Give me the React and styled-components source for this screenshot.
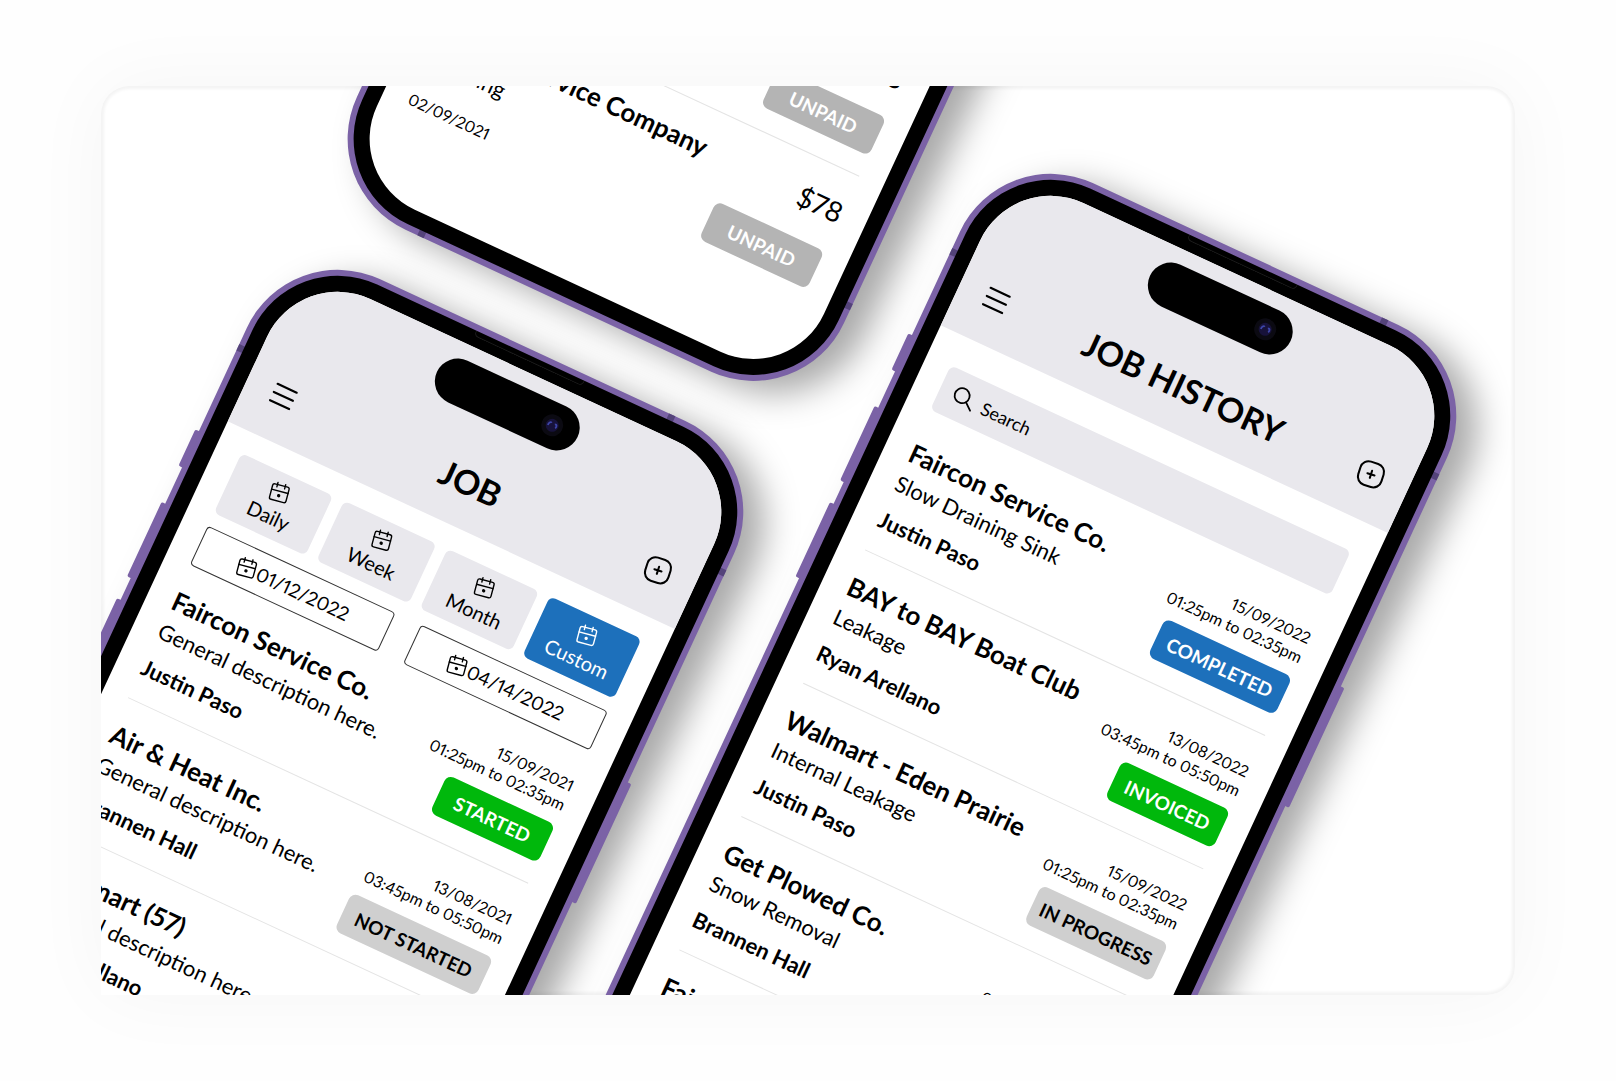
import React from 'react';
import styled, { createGlobalStyle } from 'styled-components';

const GlobalStyle = createGlobalStyle`
  * {
    box-sizing: border-box;
  }

  body {
    margin: 0;
    background-color: #fefefe;
    font-family: Lato, 'Open Sans', sans-serif;
    font-variant-numeric: proportional-nums;
    color: #000;
  }

  button, input {
    font-family: inherit;
    font-variant-numeric: inherit;
    color: inherit;
  }
`;

const Page = styled.main`
  display: flex;
  min-height: 100vh;
  padding: 86px 101px;
`;

const Card = styled.section`
  position: relative;
  flex: 1;
  overflow: hidden;
  border-radius: 28px 28px 28px 0;
  background-color: #fff;
  box-shadow: inset 0 0 3px 3px #f4f4f4;
`;

const CardGlow = styled.div`
  display: flex;
  flex: 1;
  border-radius: 28px;
  box-shadow: 0 0 80px rgba(0, 0, 0, 0.04);
`;

// Phones lie at an angle on the card, so each one carries its own spot
const Phone = styled.article`
  position: absolute;
  left: ${props => props.$x}px;
  top: ${props => props.$y}px;
  width: 537px;
  height: 1112px;
  padding: 6px;
  border-radius: 100px;
  background-color: #7b62a6;
  transform: rotate(24.9deg);
  transform-origin: top left;
  box-shadow: 24px 2px 34px rgba(0, 0, 0, 0.34);
`;

const Bezel = styled.div`
  position: relative;
  height: 100%;
  padding: 16px;
  border-radius: 94px;
  background-color: #000;
`;

const Screen = styled.div`
  display: flex;
  flex-direction: column;
  justify-content: ${props => (props.$end ? 'flex-end' : 'flex-start')};
  height: 100%;
  overflow: hidden;
  border-radius: 78px;
  background-color: #fff;
`;

const SideKey = styled.span`
  position: absolute;
  ${props => props.$side}: -4px;
  top: ${props => props.$top}px;
  width: 6px;
  height: ${props => props.$length}px;
  border-radius: 2px;
  background-color: #7b62a6;
`;

const Antenna = styled.span`
  position: absolute;
  ${props => props.$edge}: 0;
  ${props => props.$from}: ${props => props.$at}px;
  width: 7px;
  height: 7px;
  background-color: #54437a;
`;

const Earpiece = styled.span`
  position: absolute;
  top: 0;
  left: 203px;
  width: 120px;
  height: 6px;
  border: 1px solid #1c1c1c;
  border-top: none;
  border-radius: 0 0 5px 5px;
`;

const Island = styled.div`
  position: absolute;
  top: 31px;
  left: 185px;
  width: 155px;
  height: 46px;
  border-radius: 23px;
  background-color: #000;
`;

const Camera = styled.svg`
  position: absolute;
  top: 12px;
  right: 17px;
  width: 22px;
  height: 22px;
`;

const Header = styled.header`
  display: flex;
  flex-shrink: 0;
  align-items: flex-end;
  justify-content: space-between;
  height: 171px;
  padding: 0 26px 24px;
  background-color: #e9e8ed;
`;

const Title = styled.h1`
  margin: 0;
  font-size: 34px;
  line-height: 44px;
  font-weight: 700;
`;

const IconButton = styled.button`
  display: flex;
  align-items: center;
  justify-content: center;
  width: 28px;
  height: 44px;
  padding: 0;
  border: none;
  background: none;
`;

const Tabs = styled.nav`
  display: grid;
  grid-template-columns: repeat(4, 1fr);
  gap: 12px;
  margin: 23px 26px 0;
`;

const Tab = styled.button`
  display: flex;
  flex-direction: column;
  align-items: center;
  height: 66px;
  padding: 9px 0 0;
  border: none;
  border-radius: 6px;
  background-color: ${props => (props.$active ? '#1d70bb' : '#e9e8ed')};
  color: ${props => (props.$active ? '#fff' : '#000')};
  font-size: 20px;
  line-height: 28px;
`;

const DateRange = styled.div`
  display: grid;
  grid-template-columns: repeat(2, 1fr);
  gap: 28px;
  margin: 14px 26px 0;
`;

const DateButton = styled.button`
  display: flex;
  align-items: center;
  justify-content: center;
  gap: 1px;
  height: 43px;
  padding: 0;
  border: 1px solid #333;
  border-radius: 4px;
  background-color: #fff;
  font-size: 19px;
`;

const SearchBox = styled.label`
  display: flex;
  flex-shrink: 0;
  align-items: center;
  gap: 8px;
  height: 49px;
  margin: 32px 26px 8px;
  padding: 0 12px;
  border-radius: 6px;
  background-color: #e9e8ed;
`;

const SearchInput = styled.input`
  flex: 1;
  min-width: 0;
  padding: 0;
  border: none;
  outline: none;
  background: none;
  font-size: 18px;

  &::placeholder {
    color: #000;
    opacity: 1;
  }
`;

const List = styled.ul`
  margin: 0 26px;
  padding: 0;
  list-style: none;
`;

const Row = styled.li`
  display: flex;
  justify-content: space-between;
  height: 147px;
  padding-top: 21px;
  border-bottom: 1px solid #e4e4e4;
  white-space: nowrap;

  &:last-child {
    border-bottom: none;
  }
`;

const Company = styled.h2`
  margin: 0;
  font-size: 26px;
  line-height: 34px;
  font-weight: 700;
`;

const Description = styled.p`
  margin: 0 0 6px;
  font-size: 22px;
  line-height: 34px;
`;

const Person = styled.p`
  margin: 0;
  font-size: 22px;
  line-height: 34px;
  font-weight: 700;
`;

const Small = styled.span`
  font-size: 16px;
  line-height: 21px;
`;

const InvoiceDate = styled.p`
  margin: 12px 0 0;
  font-size: 16px;
  line-height: 34px;
`;

const Meta = styled.div`
  display: flex;
  flex-direction: column;
  align-items: flex-end;
  padding-top: 8px;
`;

const Amount = styled.span`
  margin-bottom: 18px;
  font-size: 28px;
  line-height: 24px;
`;

const tones = {
  blue: ['#1d70bb', '#fff'],
  green: ['#00b80c', '#fff'],
  light: ['#cfcfcf', '#000'],
  grey: ['#b4b4b4', '#fff'],
};

const widths = { small: 119, medium: 140, large: 156 };

const Status = styled.button`
  width: ${props => widths[props.$size || 'small']}px;
  height: 42px;
  margin-top: 11px;
  padding: 0;
  border: none;
  border-radius: 7px;
  background-color: ${props => tones[props.$tone][0]};
  color: ${props => tones[props.$tone][1]};
  font-size: 19px;
  font-weight: 700;
`;

function CalendarIcon() {
  return (
    <svg width="22" height="22" viewBox="0 0 22 22" fill="none" stroke="currentColor" strokeWidth="1.4" strokeLinecap="round" strokeLinejoin="round">
      <g transform="rotate(-10 11 11)">
        <rect x="2.500" y="3.500" width="17" height="16" rx="2" />
        <path d="M2.500 9.500H19.500M7 1.500V6M15 1.500V6" />
        <circle cx="11" cy="14" r="1" fill="currentColor" />
      </g>
    </svg>
  );
}

function MenuIcon() {
  return (
    <svg width="26" height="26" viewBox="0 0 26 26" stroke="#000" strokeWidth="2.200" strokeLinecap="round">
      <path d="M2.500 4H23.500M2.500 13H23.500M2.500 22H23.500" />
    </svg>
  );
}

function PlusIcon() {
  return (
    <svg width="30" height="30" viewBox="0 0 30 30" fill="none" stroke="#000" strokeWidth="2.200" strokeLinecap="round">
      <g transform="rotate(-7 15 15)">
        <rect x="2" y="2" width="26" height="26" rx="9" />
        <path d="M15 11V19M11 15H19" />
      </g>
    </svg>
  );
}

function SearchIcon() {
  return (
    <svg width="26" height="26" viewBox="0 0 26 26" fill="none" stroke="#000" strokeWidth="1.800" strokeLinecap="round">
      <g transform="rotate(-10 13 13)">
        <circle cx="11.500" cy="10.500" r="7.500" />
        <path d="M17 16L23 23" />
      </g>
    </svg>
  );
}

function PhoneFrame({ x, y, end, children }) {
  return (
    <Phone $x={x} $y={y}>
      <SideKey $side="left" $top={214} $length={40} />
      <SideKey $side="left" $top={294} $length={82} />
      <SideKey $side="left" $top={400} $length={82} />
      <SideKey $side="right" $top={352} $length={132} />
      <Antenna $edge="left" $from="top" $at={118} />
      <Antenna $edge="right" $from="top" $at={118} />
      <Antenna $edge="top" $from="right" $at={111} />
      <Antenna $edge="right" $from="bottom" $at={114} />
      <Antenna $edge="bottom" $from="left" $at={113} />
      <Bezel>
        <Screen $end={end}>{children}</Screen>
        <Earpiece />
        <Island>
          <Camera viewBox="0 0 22 22">
            <circle cx="11" cy="11" r="11" fill="#0b0a12" />
            <circle cx="11" cy="11" r="6.500" fill="#17123a" />
            <path d="M7 12.500C6.500 10 8 8 9.500 9M13 9C15 8 16 10.500 15 12.500" stroke="#3d45a8" strokeWidth="1.800" fill="none" />
          </Camera>
        </Island>
      </Bezel>
    </Phone>
  );
}

function TopBar({ title }) {
  return (
    <Header>
      <IconButton type="button" aria-label="Menu"><MenuIcon /></IconButton>
      <Title>{title}</Title>
      <IconButton type="button" aria-label="Add"><PlusIcon /></IconButton>
    </Header>
  );
}

function JobRow({ job }) {
  return (
    <Row>
      <div>
        <Company>{job.company}</Company>
        <Description>{job.description}</Description>
        <Person>{job.person}</Person>
      </div>
      <Meta>
        <Small>{job.date}</Small>
        <Small>{job.time}</Small>
        <Status type="button" $tone={job.tone} $size={job.size}>{job.status}</Status>
      </Meta>
    </Row>
  );
}

const tabs = ['Daily', 'Week', 'Month', 'Custom'];

const jobs = [
  { company: 'Faircon Service Co.', description: 'General description here.', person: 'Justin Paso', date: '15/09/2021', time: '01:25pm to 02:35pm', status: 'STARTED', tone: 'green' },
  { company: 'Air & Heat Inc.', description: 'General description here.', person: 'Brannen Hall', date: '13/08/2021', time: '03:45pm to 05:50pm', status: 'NOT STARTED', tone: 'light', size: 'large' },
  { company: 'Walmart (57)', description: 'General description here.', person: 'Ryan Arellano', date: '15/09/2021', time: '01:25pm to 02:35pm', status: 'STARTED', tone: 'green' },
];

const history = [
  { company: 'Faircon Service Co.', description: 'Slow Draining Sink', person: 'Justin Paso', date: '15/09/2022', time: '01:25pm to 02:35pm', status: 'COMPLETED', tone: 'blue', size: 'medium' },
  { company: 'BAY to BAY Boat Club', description: 'Leakage', person: 'Ryan Arellano', date: '13/08/2022', time: '03:45pm to 05:50pm', status: 'INVOICED', tone: 'green' },
  { company: 'Walmart - Eden Prairie', description: 'Internal Leakage', person: 'Justin Paso', date: '15/09/2022', time: '01:25pm to 02:35pm', status: 'IN PROGRESS', tone: 'light', size: 'medium' },
  { company: 'Get Plowed Co.', description: 'Snow Removal', person: 'Brannen Hall', date: '15/09/2022', time: '01:25pm to 02:35pm', status: 'COMPLETED', tone: 'blue', size: 'medium' },
  { company: 'Faircon Service Co.', description: 'Slow Draining Sink', person: 'Justin Paso', date: '15/09/2022', time: '01:25pm to 02:35pm', status: 'COMPLETED', tone: 'blue', size: 'medium' },
];

const invoices = [
  { id: 1, company: 'Faircon Service Company', description: 'Cleaning', date: '02/09/2021', amount: '$78' },
  { id: 2, company: 'Faircon Service Company', description: 'Cleaning', date: '02/09/2021', amount: '$78' },
];

const InvoiceList = styled(List)`
  margin-bottom: 70px;
`;

function App() {
  return (
    <Page>
      <GlobalStyle />
      <CardGlow>
        <Card>
          <PhoneFrame x={682} y={-907} end>
            <InvoiceList>
              {invoices.map(invoice => (
                <Row key={invoice.id}>
                  <div>
                    <Company>{invoice.company}</Company>
                    <Description>{invoice.description}</Description>
                    <InvoiceDate>{invoice.date}</InvoiceDate>
                  </div>
                  <Meta>
                    <Amount>{invoice.amount}</Amount>
                    <Status type="button" $tone="grey">UNPAID</Status>
                  </Meta>
                </Row>
              ))}
            </InvoiceList>
          </PhoneFrame>

          <PhoneFrame x={188} y={151}>
            <TopBar title="JOB" />
            <Tabs>
              {tabs.map(tab => (
                <Tab key={tab} type="button" $active={tab === 'Custom'}>
                  <CalendarIcon />
                  {tab}
                </Tab>
              ))}
            </Tabs>
            <DateRange>
              <DateButton type="button"><CalendarIcon />01/12/2022</DateButton>
              <DateButton type="button"><CalendarIcon />04/14/2022</DateButton>
            </DateRange>
            <List>
              {jobs.map(job => <JobRow key={job.company} job={job} />)}
            </List>
          </PhoneFrame>

          <PhoneFrame x={901} y={55}>
            <TopBar title="JOB HISTORY" />
            <SearchBox>
              <SearchIcon />
              <SearchInput type="search" placeholder="Search" aria-label="Search" />
            </SearchBox>
            <List>
              {history.map((job, index) => <JobRow key={index} job={job} />)}
            </List>
          </PhoneFrame>
        </Card>
      </CardGlow>
    </Page>
  );
}

export default App;
